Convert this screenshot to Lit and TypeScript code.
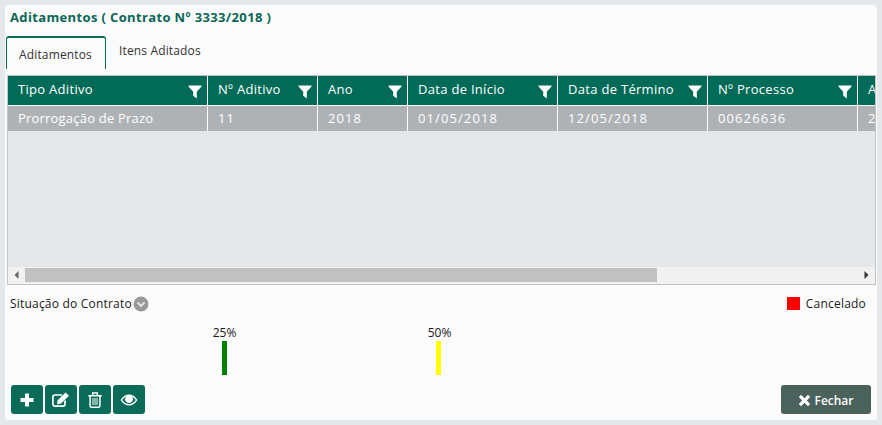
import { LitElement, html, css } from "lit";
import { customElement } from "lit/decorators.js";

const COLS = [
  { name: "Tipo Aditivo", value: "Prorrogação de Prazo", w: 200, num: false },
  { name: "Nº Aditivo", value: "11", w: 110, num: true },
  { name: "Ano", value: "2018", w: 90, num: true },
  { name: "Data de Início", value: "01/05/2018", w: 150, num: true },
  { name: "Data de Término", value: "12/05/2018", w: 150, num: true },
  { name: "Nº Processo", value: "00626636", w: 150, num: true },
  { name: "Ano", value: "2018", w: 150, num: true },
];

const filterIcon = html`<svg class="filter" viewBox="0 0 14 14" width="14" height="14">
  <path d="M0.5 0.5H13.5V1.5L8.8 6.8V13.5L5.2 10.8V6.8L0.5 1.5Z" fill="#fff" />
</svg>`;

@customElement("app-root")
export class AppRoot extends LitElement {
  static styles = css`
    :host {
      display: block;
      width: 882px;
      height: 425px;
      box-sizing: border-box;
      padding: 5px;
      background: #e4e8eb;
      font-family: "Open Sans", "Noto Sans", sans-serif;
      font-size: 12px;
      overflow: hidden;
    }
    .panel {
      box-sizing: border-box;
      height: 415px;
      width: 872px;
      background: #fbfbfb;
      border-radius: 3px;
      display: flex;
      flex-direction: column;
      padding: 5px 2px 0 1px;
    }
    .title {
      margin: 0 0 0 4px;
      height: 26px;
      font-size: 13px;
      font-weight: 700;
      line-height: 15px;
      color: #0a6656;
      letter-spacing: 0.36px;
    }
    .tabs {
      display: flex;
      height: 33px;
      align-items: flex-start;
    }
    .tab {
      box-sizing: border-box;
      height: 33px;
      color: #333;
      font-size: 12px;
      line-height: 16px;
      letter-spacing: 0.15px;
    }
    .tab.active {
      width: 100px;
      background: #fbfbfb;
      border: 1px solid #0a6b58;
      border-top-width: 2px;
      border-bottom: 0;
      border-radius: 3px 3px 0 0;
      padding: 9px 0 0 12px;
    }
    .tab.plain {
      padding: 7px 0 0 13px;
    }
    .grid {
      box-sizing: border-box;
      margin: 6px 0 0 1px;
      width: 869px;
      height: 210px;
      border: 1px solid #c0c2c3;
      background: #e4e8eb;
      display: flex;
      flex-direction: column;
      overflow: hidden;
    }
    .row {
      display: flex;
      width: 1100px;
      flex: none;
    }
    .head {
      height: 29px;
      background: #016b57;
      color: #fff;
      font-size: 13px;
      letter-spacing: 0.3px;
    }
    .cell {
      box-sizing: border-box;
      flex: none;
      display: flex;
      align-items: center;
      justify-content: space-between;
      padding: 0 5px 3px 10px;
      border-right: 1px solid #fff;
      white-space: nowrap;
    }
    .body {
      height: 25px;
      background: #afb2b5;
      color: #fff;
      font-size: 13px;
      letter-spacing: 0.2px;
      border-top: 1px solid #fff;
      box-sizing: content-box;
    }
    .body .cell {
      padding-bottom: 2px;
    }
    .num {
      letter-spacing: 1.1px;
    }
    .filter {
      margin-top: 5px;
      flex: none;
    }
    .spacer {
      flex: 1;
    }
    .scroll {
      height: 17px;
      background: #f1f1f1;
      display: flex;
      align-items: center;
      flex: none;
      padding-bottom: 1px;
      box-sizing: border-box;
    }
    .arrow {
      width: 17px;
      flex: none;
      display: flex;
      justify-content: center;
    }
    .thumb {
      width: 632px;
      height: 14px;
      background: #c1c1c1;
    }
    .scroll .gap {
      flex: 1;
    }
    .status {
      display: flex;
      justify-content: space-between;
      margin: 10px 9px 0 3px;
      height: 20px;
      color: #1a1a1a;
      font-size: 12px;
      line-height: 17px;
      letter-spacing: 0.2px;
    }
    .status-left {
      display: flex;
      align-items: flex-start;
      padding-left: 1px;
    }
    .chev {
      margin: 1px 0 0 1px;
    }
    .legend {
      display: flex;
      align-items: flex-start;
    }
    .swatch {
      width: 13px;
      height: 13px;
      background: #f00;
      margin: 2px 6px 0 0;
    }
    .bars {
      display: flex;
      height: 51px;
      margin-top: 11px;
      align-items: flex-start;
    }
    .bar-item {
      display: flex;
      flex-direction: column;
      align-items: center;
      width: 40px;
      font-size: 12px;
      line-height: 14px;
      color: #1a1a1a;
    }
    .bar-item.first {
      margin-left: 198px;
    }
    .bar-item.first .pct {
      padding-left: 1px;
    }
    .bar-item.second {
      margin-left: 174px;
    }
    .bar-item.second .pct {
      padding-left: 3px;
    }
    .bar {
      width: 5px;
      height: 34px;
      margin-top: 1px;
    }
    .actions {
      display: flex;
      justify-content: space-between;
      margin: 8px 4px 0 5px;
    }
    .left {
      display: flex;
      gap: 2px;
    }
    button {
      box-sizing: border-box;
      border: 0;
      padding: 0;
      height: 29px;
      border-radius: 3px;
      color: #fff;
      font-family: inherit;
      display: flex;
      align-items: center;
      justify-content: center;
    }
    .icon-btn {
      width: 32px;
      background: #0a6b58;
    }
    .close {
      width: 90px;
      background: #4a615c;
      font-size: 12px;
      font-weight: 600;
      gap: 3px;
      padding-top: 1px;
    }
  `;

  render() {
    return html`<div class="panel">
      <h1 class="title">Aditamentos ( Contrato Nº 3333/2018 )</h1>
      <div class="tabs">
        <div class="tab active">Aditamentos</div>
        <div class="tab plain">Itens Aditados</div>
      </div>
      <div class="grid">
        <div class="row head">
          ${COLS.map(
            (c) => html`<div class="cell" style="width:${c.w}px"><span>${c.name}</span>${filterIcon}</div>`
          )}
        </div>
        <div class="row body">
          ${COLS.map(
            (c) =>
              html`<div class="cell" style="width:${c.w}px"><span class=${c.num ? "num" : ""}>${c.value}</span></div>`
          )}
        </div>
        <div class="spacer"></div>
        <div class="scroll">
          <div class="arrow">
            <svg width="5" height="8" viewBox="0 0 5 8"><path d="M4.5 0V8L0.5 4Z" fill="#666" /></svg>
          </div>
          <div class="thumb"></div>
          <div class="gap"></div>
          <div class="arrow">
            <svg width="5" height="8" viewBox="0 0 5 8"><path d="M0.5 0V8L4.5 4Z" fill="#333" /></svg>
          </div>
        </div>
      </div>
      <div class="status">
        <div class="status-left">
          <span>Situação do Contrato</span>
          <svg class="chev" width="16" height="16" viewBox="0 0 16 16">
            <circle cx="8" cy="8" r="7.5" fill="#999" />
            <path d="M4.5 6.5L8 10L11.5 6.5" fill="none" stroke="#e8e8e8" stroke-width="1.8" />
          </svg>
        </div>
        <div class="legend"><span class="swatch"></span><span>Cancelado</span></div>
      </div>
      <div class="bars">
        <div class="bar-item first"><span class="pct">25%</span><span class="bar" style="background:#008000"></span></div>
        <div class="bar-item second"><span class="pct">50%</span><span class="bar" style="background:#ffff00"></span></div>
      </div>
      <div class="actions">
        <div class="left">
          <button class="icon-btn" aria-label="Adicionar">
            <svg width="14" height="14" viewBox="0 0 14 14"><path d="M5 0.5H9V5H13.5V9H9V13.5H5V9H0.5V5H5Z" fill="#fff" /></svg>
          </button>
          <button class="icon-btn" aria-label="Editar">
            <svg width="18" height="15" viewBox="0 0 18 15">
              <path d="M13 8.5V12.2A2 2 0 0 1 11 14.1H2.8A2 2 0 0 1 0.9 12.2V5A2 2 0 0 1 2.8 3H10" fill="none" stroke="#fff" stroke-width="1.7" />
              <path d="M5.5 8.5L13.5 0.5L17 3.8L9 11.6L5 12.5Z" fill="#fff" />
            </svg>
          </button>
          <button class="icon-btn" aria-label="Excluir">
            <svg width="14" height="16" viewBox="0 0 14 16">
              <path d="M0.3 3.7H13.7M4.7 3.2V1H9.3V3.2" fill="none" stroke="#fff" stroke-width="1.5" />
              <path d="M2.1 4V14A1.3 1.3 0 0 0 3.4 15.2H10.6A1.3 1.3 0 0 0 11.9 14V4" fill="none" stroke="#fff" stroke-width="1.5" />
              <path d="M5 6V13M7 6V13M9 6V13" stroke="#fff" stroke-width="1" />
            </svg>
          </button>
          <button class="icon-btn" aria-label="Visualizar">
            <svg width="18" height="12" viewBox="0 0 18 12">
              <path d="M0.5 6C3 2 6 0.5 9 0.5S15 2 17.5 6C15 10 12 11.5 9 11.5S3 10 0.5 6Z" fill="#fff" />
              <path d="M2.2 6C4 3.6 5.6 2.5 6.3 2.4A3.8 3.8 0 1 0 11.7 2.4C12.8 2.9 14.4 4.2 15.8 6C14 8.3 11.6 10.2 9 10.2S4 8.3 2.2 6Z" fill="#0a6b58" />
              <circle cx="9" cy="5.5" r="3.3" fill="#fff" />
            </svg>
          </button>
        </div>
        <button class="close">
          <svg width="13" height="13" viewBox="0 0 13 13">
            <path d="M3 0.8L6.5 4.2L10 0.8L12.2 3L8.8 6.5L12.2 10L10 12.2L6.5 8.8L3 12.2L0.8 10L4.2 6.5L0.8 3Z" fill="#fff" />
          </svg>
          <span>Fechar</span>
        </button>
      </div>
    </div>`;
  }
}
